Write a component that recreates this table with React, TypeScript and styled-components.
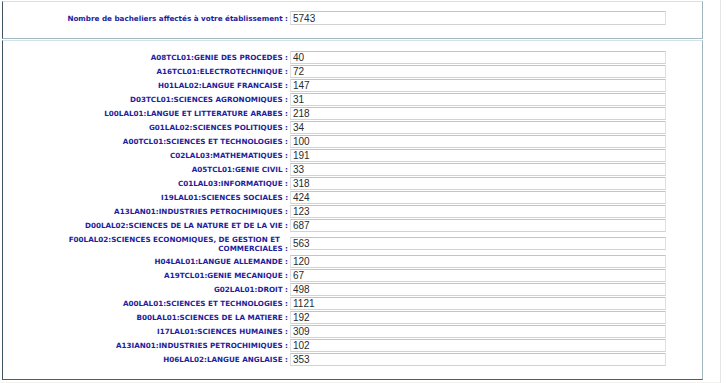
import React from "react";
import styled, { createGlobalStyle } from "styled-components";

const GlobalStyle = createGlobalStyle`
  html, body { margin: 0; padding: 0; background: #ffffff; }
  body { font-family: "DejaVu Sans", Verdana, sans-serif; }
`;

const Page = styled.div`
  width: 721px;
  height: 383px;
  box-sizing: border-box;
  border-right: 1px solid #e6e6e6;
  padding-top: 1px;
  display: flex;
  flex-direction: column;
  gap: 1px;
  overflow: hidden;
`;

const Panel = styled.section<{ $bottom: string; $pad: string }>`
  width: 701px;
  box-sizing: border-box;
  margin-left: 2px;
  border-left: 1px solid #3e5462;
  border-top: 1px solid #cfe3eb;
  border-right: 1px solid #9fb4bb;
  border-bottom: 1px solid ${(p) => p.$bottom};
  padding: ${(p) => p.$pad};
  display: grid;
  grid-template-columns: 285px 376px;
  column-gap: 2px;
  row-gap: 1px;
  align-items: center;
`;

const Label = styled.label`
  text-align: right;
  font: bold 7.2px/9px "DejaVu Sans", Verdana, sans-serif;
  color: #1e1e9c;
  padding: 1.5px 0;
`;

const WrapLine = styled.span<{ $shift: number }>`
  display: block;
  padding-right: ${(p) => p.$shift}px;
`;

const Field = styled.input<{ $h: number }>`
  box-sizing: border-box;
  width: 376px;
  height: ${(p) => p.$h}px;
  margin: 0;
  padding: 0 0 0 2px;
  border: 1px solid #e0e0e0;
  border-top-color: #c4c4c4;
  border-bottom-color: #d2d2d2;
  font: 10px/11px "Liberation Sans", Arial, sans-serif;
  color: #2a2a2a;
  background: #ffffff;
  outline: none;
`;

const Strip = styled.div`
  height: 3px;
  margin-top: 1px;
  background: #f4f2ee;
`;

type Row = { label: string; lines?: string[]; value: string };

const rows: Row[] = [
  { label: "A08TCL01:GENIE DES PROCEDES :", value: "40" },
  { label: "A16TCL01:ELECTROTECHNIQUE :", value: "72" },
  { label: "H01LAL02:LANGUE FRANCAISE :", value: "147" },
  { label: "D03TCL01:SCIENCES AGRONOMIQUES :", value: "31" },
  { label: "L00LAL01:LANGUE ET LITTERATURE ARABES :", value: "218" },
  { label: "G01LAL02:SCIENCES POLITIQUES :", value: "34" },
  { label: "A00TCL01:SCIENCES ET TECHNOLOGIES :", value: "100" },
  { label: "C02LAL03:MATHEMATIQUES :", value: "191" },
  { label: "A05TCL01:GENIE CIVIL :", value: "33" },
  { label: "C01LAL03:INFORMATIQUE :", value: "318" },
  { label: "I19LAL01:SCIENCES SOCIALES :", value: "424" },
  { label: "A13LAN01:INDUSTRIES PETROCHIMIQUES :", value: "123" },
  { label: "D00LAL02:SCIENCES DE LA NATURE ET DE LA VIE :", value: "687" },
  {
    label: "F00LAL02:SCIENCES ECONOMIQUES, DE GESTION ET COMMERCIALES :",
    lines: ["F00LAL02:SCIENCES ECONOMIQUES, DE GESTION ET", "COMMERCIALES :"],
    value: "563",
  },
  { label: "H04LAL01:LANGUE ALLEMANDE :", value: "120" },
  { label: "A19TCL01:GENIE MECANIQUE :", value: "67" },
  { label: "G02LAL01:DROIT :", value: "498" },
  { label: "A00LAL01:SCIENCES ET TECHNOLOGIES :", value: "1121" },
  { label: "B00LAL01:SCIENCES DE LA MATIERE :", value: "192" },
  { label: "I17LAL01:SCIENCES HUMAINES :", value: "309" },
  { label: "A13IAN01:INDUSTRIES PETROCHIMIQUES :", value: "102" },
  { label: "H06LAL02:LANGUE ANGLAISE :", value: "353" },
];

export default function App() {
  return (
    <>
      <GlobalStyle />
      <Page>
        <Panel $bottom="#a6b7bd" $pad="9px 0 13px 0">
          <Label htmlFor="total">Nombre de bacheliers affectés à votre établissement :</Label>
          <Field id="total" $h={14} readOnly defaultValue="5743" />
        </Panel>
        <Panel $bottom="#4a5e69" $pad="10px 0 13px 0">
          {rows.map((r, i) => (
            <React.Fragment key={i}>
              <Label htmlFor={`f${i}`}>
                {r.lines
                  ? r.lines.map((l, j) => (
                      <WrapLine key={j} $shift={j === 0 ? 8 : 0}>
                        {l}
                      </WrapLine>
                    ))
                  : r.label}
              </Label>
              <Field id={`f${i}`} $h={13} readOnly defaultValue={r.value} />
            </React.Fragment>
          ))}
        </Panel>
        <Strip />
      </Page>
    </>
  );
}
